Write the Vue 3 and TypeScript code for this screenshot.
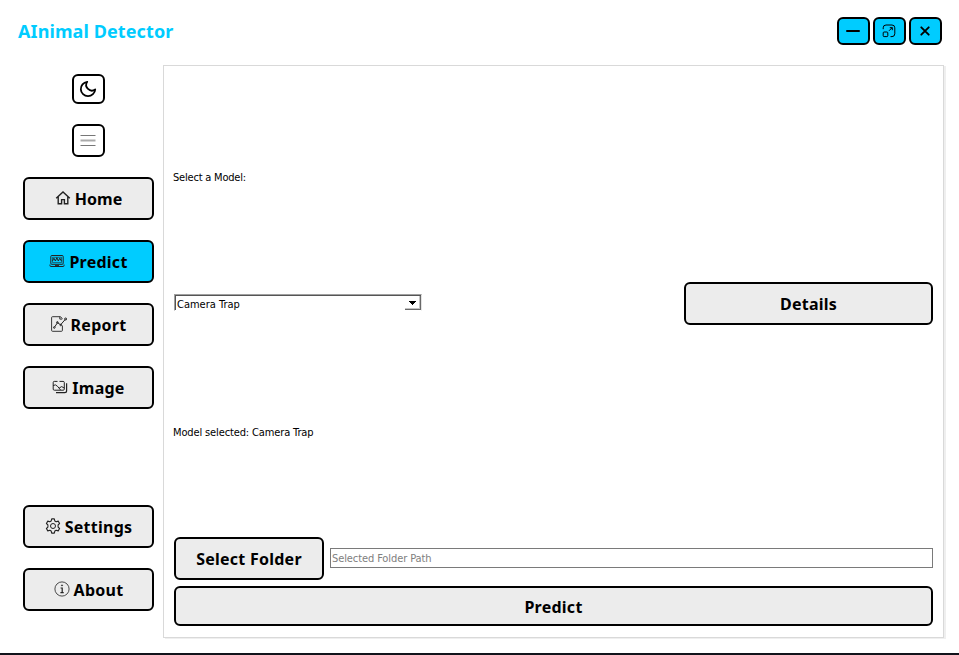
<script setup lang="ts">
import { ref } from 'vue'

interface NavItem {
  id: string
  label: string
}

const topItems: NavItem[] = [
  { id: 'home', label: 'Home' },
  { id: 'predict', label: 'Predict' },
  { id: 'report', label: 'Report' },
  { id: 'image', label: 'Image' },
]
const bottomItems: NavItem[] = [
  { id: 'settings', label: 'Settings' },
  { id: 'about', label: 'About' },
]
const active = ref('predict')
const model = ref('Camera Trap')
const folder = ref('')
</script>

<template>
  <div class="window">
    <header class="titlebar">
      <h1 class="title">AInimal Detector</h1>
      <div class="controls">
        <button class="control" aria-label="Minimize">
          <svg width="16" height="16" viewBox="0 0 16 16"><path d="M2 8h12" stroke-width="2" stroke-linecap="round" /></svg>
        </button>
        <button class="control" aria-label="Maximize">
          <svg width="16" height="16" viewBox="0 0 16 16">
            <path d="M2.2 6.2V4.8a2.8 2.8 0 0 1 2.8-2.8h6a2.8 2.8 0 0 1 2.8 2.8v6a2.8 2.8 0 0 1-2.8 2.8H9.5" />
            <rect x="2.2" y="9" width="4.6" height="4.6" rx="0.9" />
            <path d="M8 7.8l3.2-3.2M8.8 4.7h2.5v2.5" />
          </svg>
        </button>
        <button class="control" aria-label="Close">
          <svg width="16" height="16" viewBox="0 0 16 16"><path d="M4.3 4.3l7.4 7.4M11.7 4.3l-7.4 7.4" stroke-width="1.9" stroke-linecap="round" /></svg>
        </button>
      </div>
    </header>

    <div class="body">
      <nav class="sidebar">
        <button class="tool moon" aria-label="Theme">
          <svg width="18" height="18" viewBox="0 0 18 18"><path d="M8.2 1.8A7.2 7.2 0 1 0 16.2 9.4A5.6 5.6 0 0 1 8.2 1.8Z" stroke-width="1.8" stroke-linejoin="round" /></svg>
        </button>
        <button class="tool menu" aria-label="Menu">
          <svg width="16" height="12" viewBox="0 0 16 12">
            <path d="M0.5 0.5h15M0.5 10.5h15" stroke="#777" />
            <path d="M0.5 5.5h15" stroke="#aaa" stroke-width="2" />
          </svg>
        </button>

        <button
          v-for="item in topItems"
          :key="item.id"
          class="btn nav"
          :class="[item.id, { active: active === item.id }]"
          @click="active = item.id"
        >
          <svg v-if="item.id === 'home'" class="icon" viewBox="0 0 16 16">
            <path d="M1.2 8.2L8 2l6.8 6.2M3.2 6.8v7h3.4V9.6h2.8v4.2h3.4v-7" stroke-width="1.4" />
          </svg>
          <svg v-else-if="item.id === 'predict'" class="icon" viewBox="0 0 16 16">
            <rect x="1.8" y="2.5" width="12.4" height="8.8" rx="1" />
            <path d="M3.5 4.3h9v5.3h-9z" stroke-width="0.6" />
            <path d="M3.5 8l1.4-2.8L6.4 8l1.5-3.4L9.3 8l1.5-2.8L12.4 8" />
            <path d="M1 11.5v1.3q0 .7.7.7h12.6q.7 0 .7-.7v-1.3M6 12.4h4" />
          </svg>
          <svg v-else-if="item.id === 'report'" class="icon" viewBox="0 0 16 16">
            <path d="M9.5 .7H1.5q-.9 0-.9.9v12.8q0 .9.9.9h9q.9 0 .9-.9V9.5M9.5 .7l1.9 2M8.8 .8v2.3h2.4" stroke-width="0.9" />
            <path d="M3.6 11L6.5 6.7 9.6 8.8 14.2 3.5" />
            <circle cx="3.3" cy="11.5" r="0.8" /><circle cx="6.4" cy="6.4" r="0.8" />
            <circle cx="9.8" cy="9" r="0.8" /><circle cx="14.6" cy="3" r="1" />
          </svg>
          <svg v-else class="icon" viewBox="0 0 16 16">
            <path d="M5.5 2.4H2.3Q1.2 2.4 1.2 3.5v6.6q0 1.1 1.1 1.1h8.9q1.1 0 1.1-1.1V3.5q0-1.1-1.1-1.1H7.5" />
            <path d="M1.2 6.6Q3.5 4.8 5.4 7.2L8.6 11M7.2 9Q9.6 6.2 12.2 9" />
            <path d="M14.6 4.2v7.6q0 1.9-1.9 1.9H4" stroke-width="1.2" />
          </svg>
          <span>{{ item.label }}</span>
        </button>

        <div class="spacer"></div>

        <button
          v-for="item in bottomItems"
          :key="item.id"
          class="btn nav"
          :class="[item.id, { active: active === item.id }]"
          @click="active = item.id"
        >
          <svg v-if="item.id === 'settings'" class="icon" viewBox="0 0 16 16">
            <path d="M6.7.9h2.6l.5 2 1.4.8 2-.6 1.4 2.4-1.5 1.4v2.2l1.5 1.4-1.4 2.4-2-.6-1.4.8-.5 2H6.7l-.5-2-1.4-.8-2 .6-1.4-2.4 1.5-1.4V6.9L1.4 5.5l1.4-2.4 2 .6 1.4-.8z" stroke-width="1.1" stroke-linejoin="round" />
            <circle cx="8" cy="8" r="2.5" />
          </svg>
          <svg v-else class="icon" viewBox="0 0 16 16">
            <circle cx="8" cy="8" r="7.1" stroke-width=".8" />
            <circle cx="8" cy="4.4" r=".6" fill="currentColor" stroke-width=".5" />
            <path d="M6.6 7h1.6v4.5M6.4 11.6h3.3" stroke-width="1.2" />
          </svg>
          <span>{{ item.label }}</span>
        </button>
      </nav>

      <main class="panel">
        <p class="label first">Select a Model:</p>
        <div class="row model-row">
          <div class="combo" role="combobox">
            <span>{{ model }}</span>
            <div class="drop"><svg width="7" height="4" viewBox="0 0 7 4" shape-rendering="crispEdges"><path d="M0 0h7v1H6v1H5v1H4v1H3V3H2V2H1V1H0z" fill="#000" stroke="none" /></svg></div>
          </div>
          <button class="btn details"><span>Details</span></button>
        </div>
        <p class="label second">Model selected: {{ model }}</p>
        <div class="row folder-row">
          <button class="btn select-folder"><span>Select Folder</span></button>
          <input v-model="folder" class="path" placeholder="Selected Folder Path" />
        </div>
        <button class="btn run"><span>Predict</span></button>
      </main>
    </div>
  </div>
</template>

<style>
body {
  background: #fff;
  overflow: hidden;
}
</style>

<style scoped>
* {
  box-sizing: border-box;
}
.window {
  width: 959px;
  height: 655px;
  display: flex;
  flex-direction: column;
  background: #fff;
  border-bottom: 2px solid #11131b;
  color: #000;
  font-family: "DejaVu Sans Condensed", "Noto Sans", sans-serif;
  font-size: 11px;
}
svg {
  display: block;
  flex: none;
  fill: none;
  stroke: currentColor;
}
button {
  font: inherit;
  color: #000;
  padding: 0;
  margin: 0;
}
.titlebar {
  height: 65px;
  flex: none;
  display: flex;
  justify-content: space-between;
  align-items: flex-start;
  padding: 17px 17px 0 18px;
}
.title {
  margin: 0;
  font: bold 18px/28px "Noto Sans", sans-serif;
  letter-spacing: 0.1px;
  color: #0cf;
  white-space: nowrap;
}
.controls {
  display: flex;
  gap: 3px;
}
.control,
.tool {
  width: 33px;
  display: flex;
  align-items: center;
  justify-content: center;
  border: 2px solid #000;
  border-radius: 6px;
  padding-right: 1px;
}
.control {
  height: 28px;
  background: #0cf;
}
.body {
  flex: 1;
  min-height: 0;
  display: flex;
}
.sidebar {
  width: 163px;
  padding: 9px 9px 42px 23px;
  display: flex;
  flex-direction: column;
  align-items: center;
  gap: 20px;
}
.tool {
  background: #fff;
  flex: none;
}
.moon {
  height: 30px;
}
.menu {
  height: 33px;
}
.spacer {
  flex: 1;
  margin-bottom: -20px;
}
.btn {
  flex: none;
  height: 43px;
  display: flex;
  align-items: center;
  justify-content: center;
  background: #ececec;
  border: 2px solid #000;
  border-radius: 6px;
  font: bold 16px/22px "Noto Sans", sans-serif;
  letter-spacing: 0.25px;
  white-space: nowrap;
}
.nav {
  width: 131px;
  gap: 4px;
}
.home {
  letter-spacing: 0;
}
.active {
  background: #0cf;
}
.icon {
  width: 16px;
  height: 16px;
  margin-bottom: 2px;
  color: #222;
}
.panel {
  width: 781px;
  height: 573px;
  border: 1px solid #d9d9d9;
  box-shadow: 2px 1px 0 #efefef;
  padding: 10px 10px 11px;
  display: flex;
  flex-direction: column;
}
.label {
  margin: 0 0 0 -1px;
  display: flex;
  align-items: center;
  white-space: nowrap;
}
.first {
  height: 206px;
  padding-bottom: 4px;
  letter-spacing: -0.2px;
}
.row {
  display: flex;
  align-items: center;
  flex: none;
}
.model-row {
  height: 43px;
  justify-content: space-between;
}
.combo {
  width: 248px;
  height: 17px;
  margin-bottom: 2px;
  border: 1px solid #a0a0a0;
  border-bottom-color: #fff;
  border-right-color: #e3e3e3;
  box-shadow: inset 1px 1px 0 #555;
  padding-left: 2px;
  display: flex;
  align-items: center;
  justify-content: space-between;
}
.combo span {
  padding-top: 3px;
}
.drop {
  width: 16px;
  height: 14px;
  align-self: flex-end;
  display: flex;
  align-items: center;
  justify-content: center;
  border: solid #696969;
  border-width: 0 1px 1px 0;
  box-shadow: inset -1px -1px 0 #c4c4c4;
}
.details {
  width: 249px;
}
.second {
  height: 212px;
  padding-top: 2px;
  letter-spacing: -0.13px;
}
.folder-row {
  gap: 6px;
  margin-bottom: 6px;
}
.select-folder {
  width: 150px;
}
.path {
  flex: 1;
  height: 20px;
  margin-bottom: 1px;
  border: 1px solid #7a7a7a;
  border-radius: 0;
  background: #fff;
  padding: 1px 1px 0;
  font: inherit;
  letter-spacing: -0.1px;
  outline: none;
}
.path::placeholder {
  color: #808080;
  opacity: 1;
}
.run {
  height: 40px;
  padding-top: 1px;
}
</style>
